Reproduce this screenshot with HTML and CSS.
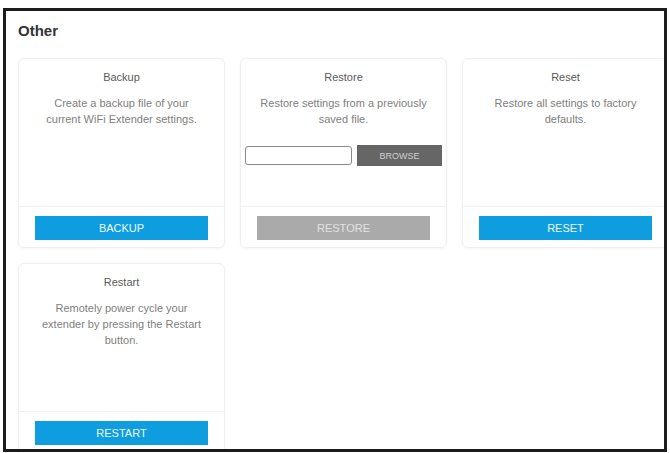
FILE: index.html
```html
<!DOCTYPE html>
<html lang="en">
<head>
    <meta charset="UTF-8">
    <meta name="viewport" content="width=device-width, initial-scale=1.0">
    <title>Other</title>
    <link rel="stylesheet" href="styles.css">
</head>
<body>
    <div class="frame">
        <h2 class="section-title">Other</h2>
        <div class="cards">
            <div class="card">
                <div class="card-body">
                    <div class="card-title">Backup</div>
                    <p class="card-text">Create a backup file of your<br>current WiFi Extender settings.</p>
                </div>
                <div class="card-footer">
                    <button class="btn">BACKUP</button>
                </div>
            </div>
            <div class="card">
                <div class="card-body">
                    <div class="card-title">Restore</div>
                    <p class="card-text">Restore settings from a previously<br>saved file.</p>
                    <div class="file-row">
                        <input type="text" class="file-input">
                        <button class="btn-browse">BROWSE</button>
                    </div>
                </div>
                <div class="card-footer">
                    <button class="btn btn-disabled">RESTORE</button>
                </div>
            </div>
            <div class="card">
                <div class="card-body">
                    <div class="card-title">Reset</div>
                    <p class="card-text">Restore all settings to factory<br>defaults.</p>
                </div>
                <div class="card-footer">
                    <button class="btn">RESET</button>
                </div>
            </div>
            <div class="card">
                <div class="card-body">
                    <div class="card-title">Restart</div>
                    <p class="card-text">Remotely power cycle your<br>extender by pressing the Restart<br>button.</p>
                </div>
                <div class="card-footer">
                    <button class="btn">RESTART</button>
                </div>
            </div>
        </div>
    </div>
</body>
</html>
```

FILE: styles.css
```css
html, body { margin: 0; padding: 0; background: #fff; }
body { font-family: "Liberation Sans", Arial, sans-serif; height: 453px; overflow: hidden; }

.frame {
    box-sizing: border-box;
    width: 664px;
    height: 444px;
    margin: 8px 0 0 3px;
    border: 3px solid #1c1c1c;
    overflow: hidden;
    padding: 11px 0 0 12px;
}
.section-title {
    margin: 0;
    font-size: 15px;
    line-height: 18px;
    font-weight: bold;
    color: #333;
}

.cards {
    display: grid;
    grid-template-columns: 207px 207px 207px;
    gap: 15px;
    margin-top: 18px;
}
.card {
    box-sizing: border-box;
    height: 190px;
    border: 1px solid #efefef;
    border-radius: 6px;
    box-shadow: 0 1px 3px rgba(0, 0, 0, 0.04);
    display: flex;
    flex-direction: column;
}
.card-body {
    flex: 1;
    padding: 11px 4px 0;
    text-align: center;
}
.card-title {
    font-size: 11px;
    line-height: 14px;
    color: #5a5a5a;
}
.card-text {
    margin: 11px 0 0;
    font-size: 11px;
    line-height: 16px;
    color: #808080;
}

.file-row {
    display: flex;
    align-items: center;
    gap: 5px;
    margin-top: 18px;
}
.file-input {
    box-sizing: border-box;
    width: 107px;
    height: 19px;
    border: 1px solid #8a8a8a;
    border-radius: 3px;
    margin: 0;
}
.btn-browse {
    width: 86px;
    height: 21px;
    border: none;
    background: #666;
    color: #cfcfcf;
    font-family: inherit;
    font-size: 9px;
    padding: 0;
}

.card-footer {
    border-top: 1px solid #f1f1f1;
    padding: 9px 16px 7px 16px;
}
.btn {
    display: block;
    width: 100%;
    height: 24px;
    border: none;
    background: #0e9edf;
    color: #f2f9fd;
    font-family: inherit;
    font-size: 11px;
    padding: 0;
}
.btn-disabled {
    background: #aaa;
    color: #e2e2e2;
}
```
